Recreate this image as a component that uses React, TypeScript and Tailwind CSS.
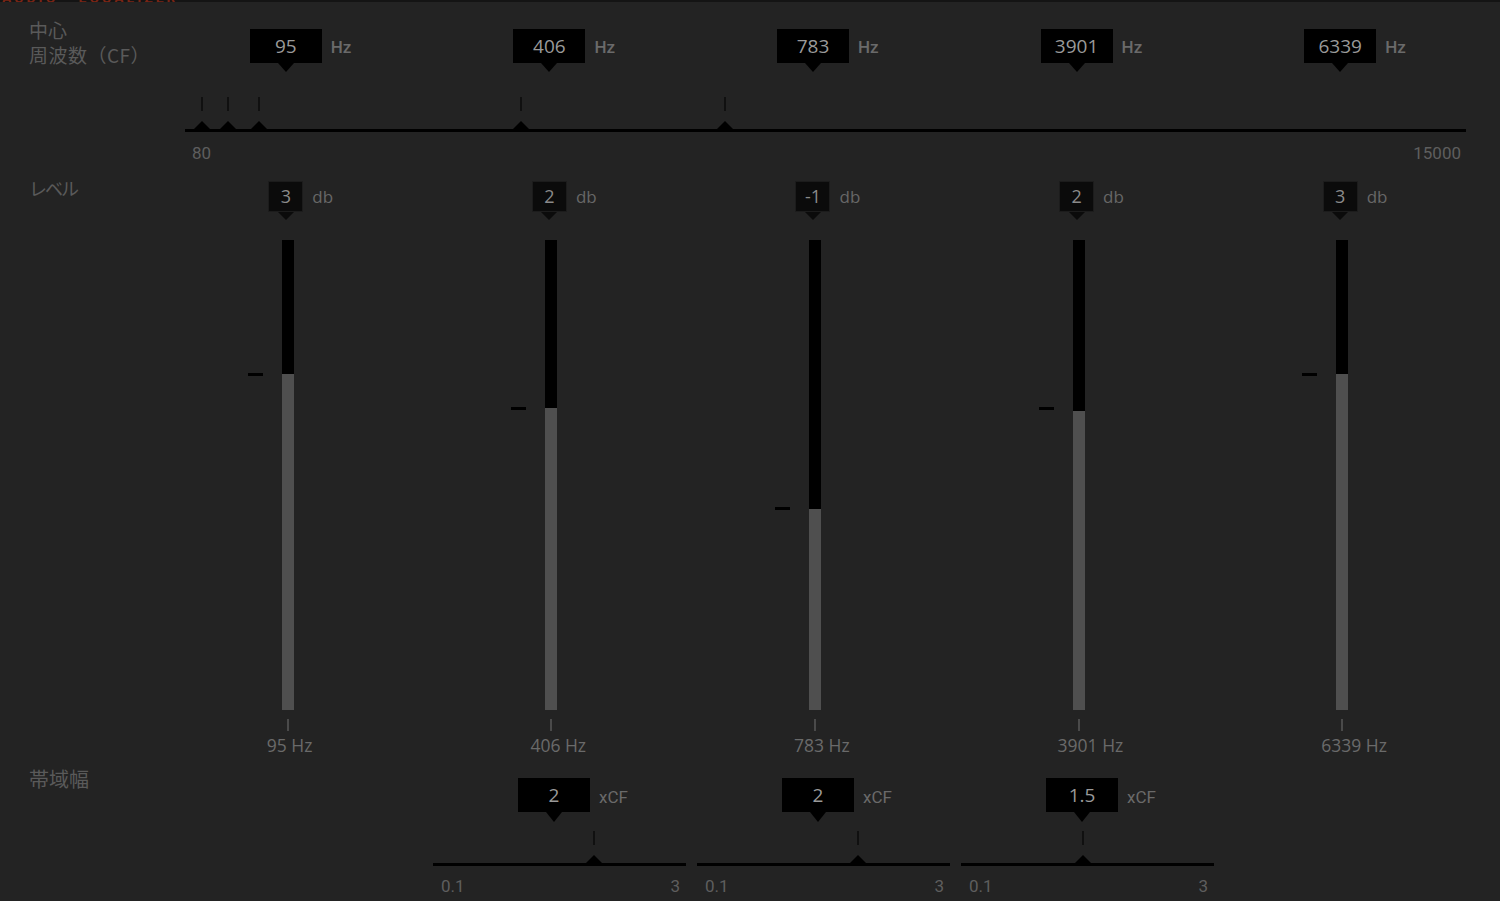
import React from 'react';

const freqs = [95, 406, 783, 3901, 6339];

const levels = [
  { hz: 95, db: '3', fill: 374, mark: 374 },
  { hz: 406, db: '2', fill: 408, mark: 408 },
  { hz: 783, db: '-1', fill: 509, mark: 508 },
  { hz: 3901, db: '2', fill: 411, mark: 408 },
  { hz: 6339, db: '3', fill: 374, mark: 374 },
];

const bands = [
  { value: '2', pos: 161 },
  { value: '2', pos: 161 },
  { value: '1.5', pos: 122 },
];

const BAR_TOP = 240;
const BAR_BOTTOM = 710;

const cjk = { fontFamily: '"Noto Sans CJK JP", "Noto Sans", sans-serif' };
const din = { fontFamily: 'Roboto, "Liberation Sans", sans-serif' };
const open = { fontFamily: '"Open Sans", "Noto Sans", sans-serif' };

const Thumb = ({ left }: { left: number }) => (
  <>
    <div className="absolute top-[2px] w-[2px] h-[14px] bg-[#101010]" style={{ left: left - 1 }} />
    <div
      className="absolute top-[26px] w-0 h-0 border-x-[8px] border-x-transparent border-b-[8px] border-b-black"
      style={{ left: left - 8 }}
    />
  </>
);

const App: React.FC = () => {
  const freqPos = (v: number) => 15.5 + (v - 80) * 0.083765;

  return (
    <div className="w-[1500px] h-[901px] bg-[#232323] overflow-hidden select-none">
      {/* cut-off window title */}
      <div className="h-[2px] bg-[#141414] overflow-hidden">
        <div className="-mt-[12px] pl-[2px] text-[14px] font-bold tracking-[3px] text-[#7a2414]" style={din}>
          AUDIO · EQUALIZER
        </div>
      </div>

      {/* center frequency */}
      <div className="flex h-[163px]">
        <div className="w-[154px] pl-[29px] pt-[15px] text-[19px] leading-[25px] text-[#5a5a5a]" style={cjk}>
          <div>中心</div>
          <div className="tracking-[0.5px]">周波数（CF）</div>
        </div>
        <div className="w-[1318px] pt-[27px]">
          <div className="grid grid-cols-5">
            {freqs.map((f) => (
              <div key={f} className="grid grid-cols-[1fr_72px_1fr]">
                <div />
                <div className="flex flex-col items-center">
                  <div className="w-[72px] h-[34px] bg-black flex items-center justify-center text-[19px] text-[#9a9a9a]" style={open}>
                    {f}
                  </div>
                  <div className="w-0 h-0 border-x-[8px] border-x-transparent border-t-[9px] border-t-black" />
                </div>
                <div className="pl-[9px] pt-[6px] text-[17px] font-medium text-[#6a6a6a]" style={din}>
                  Hz
                </div>
              </div>
            ))}
          </div>
          <div className="relative ml-[31px] w-[1281px] h-[40px] mt-[23px]">
            {freqs.map((f) => (
              <Thumb key={f} left={freqPos(f)} />
            ))}
            <div className="absolute top-[34px] left-0 right-0 h-[3px] bg-black" />
          </div>
          <div className="ml-[31px] w-[1281px] mt-[9px] flex justify-between pl-[7px] pr-[5px] text-[17px] leading-[18px] text-[#5e5e5e]" style={din}>
            <span>80</span>
            <span>15000</span>
          </div>
        </div>
      </div>

      {/* level */}
      <div className="flex h-[590px]">
        <div className="w-[154px] pl-[29px] pt-[11px] text-[18px] leading-[24px] tracking-[-2px] text-[#5a5a5a]" style={cjk}>
          レベル
        </div>
        <div className="w-[1318px] pt-[16px] grid grid-cols-5">
          {levels.map((l) => (
            <div key={l.hz} className="flex flex-col">
              <div className="grid grid-cols-[1fr_35px_1fr]">
                <div />
                <div className="flex flex-col items-center">
                  <div
                    className="w-[35px] h-[31px] bg-[#0b0b0b] border border-[#1c1c1c] flex items-center justify-center text-[18px] text-[#8a8a8a]"
                    style={open}
                  >
                    {l.db}
                  </div>
                  <div className="w-0 h-0 border-x-[8px] border-x-transparent border-t-[8px] border-t-[#0b0b0b]" />
                </div>
                <div className="pl-[9px] pt-[3px] text-[17px] text-[#676767]" style={open}>
                  db
                </div>
              </div>
              <div className="flex justify-center pl-[4px] mt-[20px]">
                <div className="relative w-[12px] bg-black flex flex-col justify-end" style={{ height: BAR_BOTTOM - BAR_TOP }}>
                  <div className="w-full bg-[#4f4f4f]" style={{ height: BAR_BOTTOM - l.fill }} />
                  <div
                    className="absolute left-[-34px] w-[15px] h-[3px] bg-black"
                    style={{ top: l.mark - BAR_TOP - 1.5 }}
                  />
                </div>
              </div>
              <div className="flex justify-center pl-[4px] mt-[9px]">
                <div className="w-[2px] h-[12px] bg-[#4a4a4a]" />
              </div>
              <div className="flex justify-center pl-[4px] mt-[4px]">
                <div className="w-[2px] relative">
                  <div className="absolute left-[-20px] whitespace-nowrap text-[17.5px] leading-[20px] text-[#6a6a6a]" style={open}>
                    {l.hz} Hz
                  </div>
                </div>
              </div>
            </div>
          ))}
        </div>
      </div>

      {/* bandwidth */}
      <div className="flex">
        <div className="w-[154px] pl-[29px] pt-[12px] text-[20px] leading-[24px] text-[#5a5a5a]" style={cjk}>
          帯域幅
        </div>
        <div className="w-[1318px] pl-[279px] pt-[23px] flex gap-[11px]">
          {bands.map((b, i) => (
            <div key={i} className="w-[253px] flex flex-col">
              <div className="flex pl-[85px]">
                <div className="flex flex-col items-center">
                  <div className="w-[72px] h-[34px] bg-black flex items-center justify-center text-[19px] text-[#9a9a9a]" style={open}>
                    {b.value}
                  </div>
                  <div className="w-0 h-0 border-x-[8px] border-x-transparent border-t-[10px] border-t-black" />
                </div>
                <div className="pl-[9px] pt-[7px] text-[17px] text-[#6a6a6a]" style={din}>
                  xCF
                </div>
              </div>
              <div className="relative h-[37px] mt-[7px]">
                <Thumb left={b.pos} />
                <div className="absolute top-[34px] left-0 right-0 h-[3px] bg-black" />
              </div>
              <div className="mt-[11px] flex justify-between pl-[8px] pr-[6px] text-[17px] leading-[18px] text-[#5e5e5e]" style={din}>
                <span>0.1</span>
                <span>3</span>
              </div>
            </div>
          ))}
        </div>
      </div>
    </div>
  );
};

export default App;
